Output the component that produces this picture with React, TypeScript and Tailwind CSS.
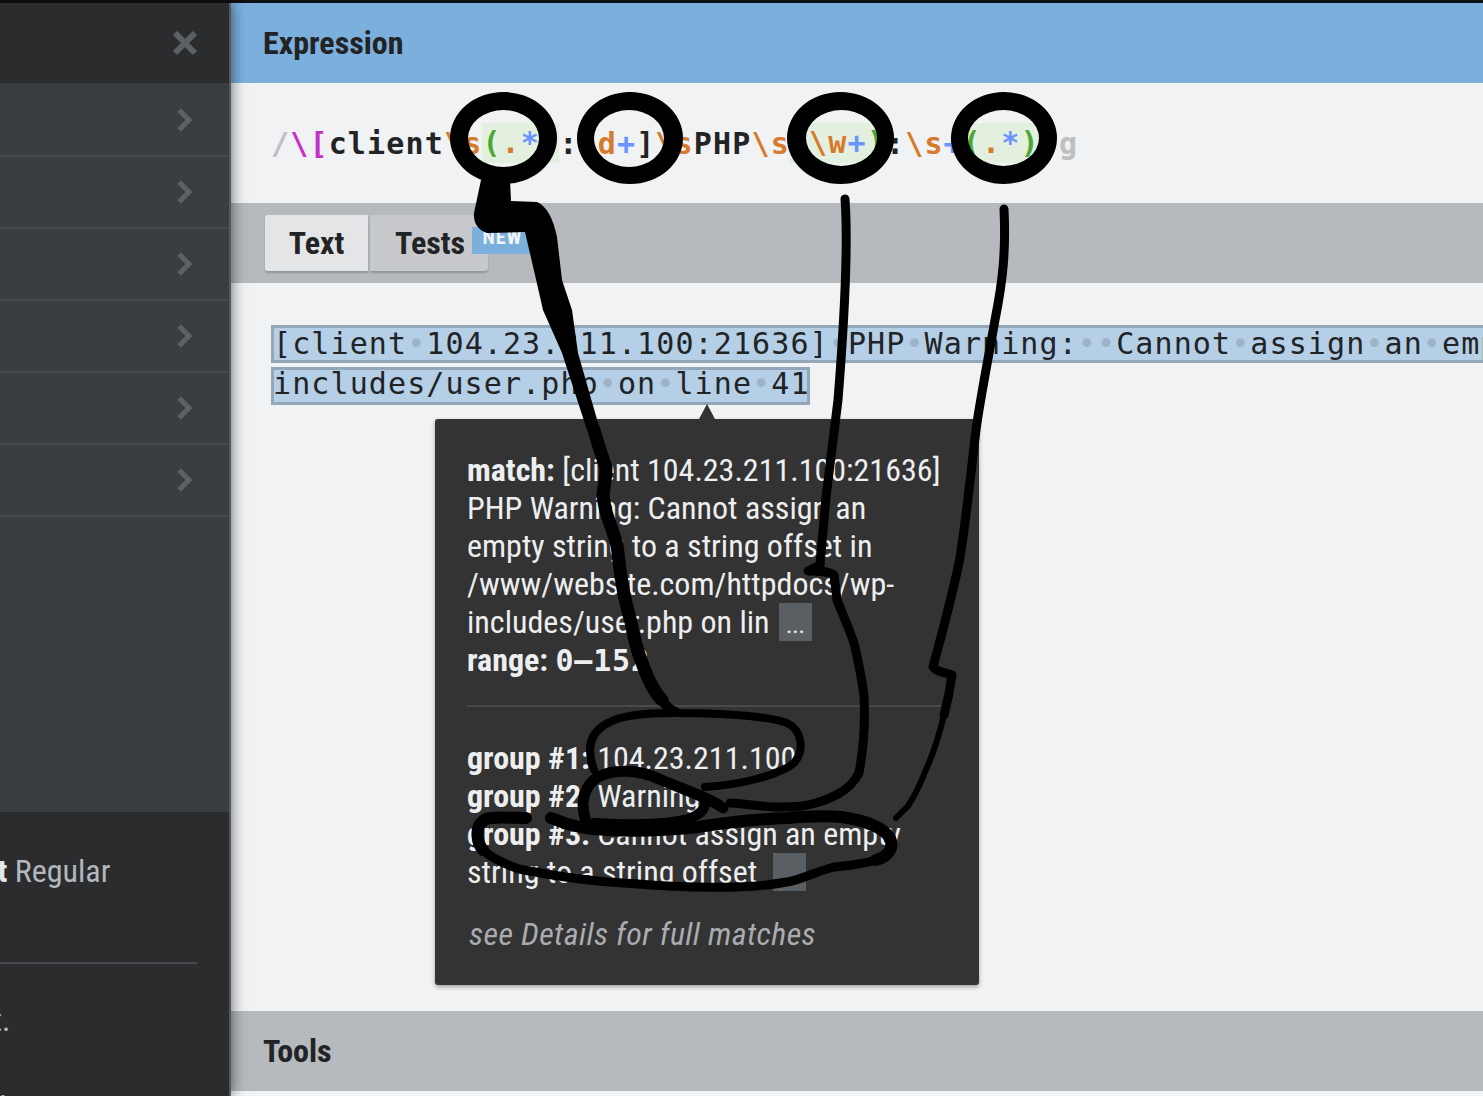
const condensed = "font-['Roboto'] [font-stretch:75%]";

const Chevron = () => (
  <svg width="16" height="24" viewBox="0 0 16 24" className="text-[#5d6165]">
    <path d="M3 2 L13 12 L3 22" fill="none" stroke="currentColor" strokeWidth="5" />
  </svg>
);

const SidebarRow = () => (
  <div className="flex h-[72px] items-center justify-end border-b-2 border-[#47494d] pr-[37px]">
    <Chevron />
  </div>
);

const Sidebar = () => (
  <aside className="z-10 flex w-[231px] shrink-0 flex-col overflow-hidden border-r-2 border-[#55585c] bg-[#3b3e41] shadow-[0_0_14px_rgba(0,0,0,0.6)]">
    <div className="flex h-20 items-center justify-end bg-[#2b2c2e] pr-[31px]">
      <svg width="26" height="26" viewBox="0 0 26 26" className="text-[#5d6165]">
        <path d="M3 3 L23 23 M23 3 L3 23" fill="none" stroke="currentColor" strokeWidth="6" />
      </svg>
    </div>
    <div className="h-[2px]" />
    {[1, 2, 3, 4, 5, 6].map((i) => (
      <SidebarRow key={i} />
    ))}
    <div className="flex-1" />
    <div className={`h-[284px] bg-[#2b2c2e] pt-[40px] ${condensed}`}>
      <p className="-ml-[49px] text-[32px] leading-[38px] text-[#b4b7bb]">
        <b className="text-[#e6e8ea]">Font</b> Regular
      </p>
      <div className="mt-[72px] h-[2px] w-[197px] bg-[#47494d]" />
      <p className="-ml-[46px] mt-[37px] text-[32px] leading-[38px] text-[#b4b7bb]">text.</p>
      <p className="-ml-[8px] mt-[49px] text-[32px] leading-[38px] text-[#b4b7bb]">ll</p>
    </div>
  </aside>
);

const SectionBand = ({ title }: { title: string }) => (
  <div className={`flex h-20 items-center bg-[#b6b9bd] pl-8 text-[32px] font-bold text-[#222325] ${condensed}`}>
    {title}
  </div>
);

const Esc = ({ children }: { children: React.ReactNode }) => <span className="text-[#d77a2b]">{children}</span>;
const Paren = ({ children }: { children: React.ReactNode }) => <span className="text-[#4aa82e]">{children}</span>;
const Quant = ({ children }: { children: React.ReactNode }) => <span className="text-[#6a95ff]">{children}</span>;
const Group = ({ children }: { children: React.ReactNode }) => (
  <span className="inline-block h-10 bg-[#e3f0df] leading-10">{children}</span>
);

const Expression = () => (
  <div className="flex h-[120px] items-center overflow-hidden whitespace-pre bg-[#f0f2f4] pl-[40px] font-['DejaVu_Sans_Mono'] text-[30px] font-bold tracking-[1.15px] text-[#222325]">
    <span className="text-[#bdbfc3]">/</span>
    <span className="text-[#c62fc6]">\[</span>client
    <Esc>\s</Esc>
    <Group>
      <Paren>(</Paren>
      <Esc>.</Esc>
      <Quant>*</Quant>
      <Paren>)</Paren>
    </Group>
    :<Esc>\d</Esc>
    <Quant>+</Quant>]<Esc>\s</Esc>PHP<Esc>\s</Esc>
    <Group>
      <Paren>(</Paren>
      <Esc>\w</Esc>
      <Quant>+</Quant>
      <Paren>)</Paren>
    </Group>
    :<Esc>\s</Esc>
    <Quant>+</Quant>
    <Group>
      <Paren>(</Paren>
      <Esc>.</Esc>
      <Quant>*</Quant>
      <Paren>)</Paren>
    </Group>
    <span className="text-[#bdbfc3]">/g</span>
  </div>
);

const Tabs = () => (
  <div className="flex h-20 items-start bg-[#b6b9bd] pl-[34px] pt-3">
    <div className={`flex h-14 w-[103px] items-center justify-center rounded-l-[3px] bg-[#e4e5e7] text-[32px] font-bold text-[#222325] shadow-[0_2px_2px_rgba(0,0,0,0.2)] ${condensed}`}>
      Text
    </div>
    <div className={`relative ml-[2px] flex h-14 w-[118px] items-center rounded-r-[3px] bg-[#c6c8cb] pl-[25px] text-[32px] font-bold text-[#222325] shadow-[0_2px_2px_rgba(0,0,0,0.2)] ${condensed}`}>
      Tests
      <div className="absolute left-[102px] top-[12px] h-[27px] w-[58px] overflow-hidden bg-[#7cb0dc] pl-[3px] text-center text-[20px] font-bold leading-[20px] tracking-[1px] text-[#f0f4f8]">
        NEW
      </div>
    </div>
  </div>
);

const Dot = () => <span className="text-[#9db3c6]">•</span>;

const SampleText = () => (
  <div className="relative flex-1 overflow-hidden bg-[#f0f2f4] pl-[40px] pt-[42px] font-['DejaVu_Sans_Mono'] text-[30px] tracking-[1.1px] text-[#222325]">
    <div className="whitespace-pre">
      <div className="h-[38px] w-[1300px] bg-[#b4cfe6] pl-[2px] leading-[38px] shadow-[inset_0_0_0_3px_#94a7b8]">
        [client<Dot />104.23.211.100:21636]<Dot />PHP<Dot />Warning:<Dot /><Dot />Cannot<Dot />assign<Dot />an<Dot />empty
      </div>
      <div className="mt-[4px] h-[38px] w-[539px] bg-[#b4cfe6] pl-[2px] leading-[34px] shadow-[inset_0_0_0_3px_#94a7b8]">
        includes/user.php<Dot />on<Dot />line<Dot />41
      </div>
    </div>
    <Tooltip />
  </div>
);

const More = ({ className }: { className: string }) => (
  <span className={`inline-block h-[38px] w-[33px] bg-[#5a5f64] text-center align-top text-[24px] leading-[44px] ${className}`}>
    ...
  </span>
);

// floats over the sample text, so it sits out of flow
const Tooltip = () => (
  <div className={`absolute left-[204px] top-[136px] z-10 w-[544px] whitespace-normal rounded-[3px] bg-[#333333] p-8 text-[32px] leading-[38px] tracking-normal text-[#eceef0] shadow-[0_2px_4px_rgba(0,0,0,0.35)] ${condensed}`}>
    <div className="absolute -top-[15px] left-[264px] h-0 w-0 border-x-[8px] border-b-[15px] border-x-transparent border-b-[#333333]" />
    <p>
      <b>match:</b> [client 104.23.211.100:21636] PHP Warning: Cannot assign an empty string to a string offset in
      /www/website.com/httpdocs/wp-includes/user.php on lin <More className="ml-[2px]" />
    </p>
    <p className="font-bold">
      range: <span className="font-['DejaVu_Sans_Mono'] text-[30px] tracking-[0.8px]">0–152</span>
    </p>
    <div className="mb-8 mt-[25px] h-[2px] bg-[#47494d]" />
    <p>
      <b>group #1:</b> 104.23.211.100
    </p>
    <p>
      <b>group #2:</b> Warning
    </p>
    <p>
      <b>group #3:</b> Cannot assign an empty string to a string offset <More className="ml-2" />
    </p>
    <p className="ml-[2px] mt-6 italic tracking-[0.38px] text-[#a9acb0]">see Details for full matches</p>
  </div>
);

// the hand drawn marks on top of the screenshot
const Scribbles = () => (
  <svg className="pointer-events-none absolute left-0 top-0 z-20" width="1483" height="1096" viewBox="0 0 1483 1096">
    <g fill="#000" fillRule="evenodd">
      <path d="M450 138a53.5 46 0 1 0 107 0a53.5 46 0 1 0-107 0zM468 138.500a35.500 28.500 0 1 1 71 0a35.500 28.500 0 1 1-71 0z" />
      <path d="M577 138a53 46 0 1 0 106 0a53 46 0 1 0-106 0zM594 138.500a35 28.500 0 1 1 70 0a35 28.500 0 1 1-70 0z" />
      <path d="M787 138a53.500 46 0 1 0 107 0a53.500 46 0 1 0-107 0zM806 138a35.500 28 0 1 1 71 0a35.500 28 0 1 1-71 0z" />
      <path d="M951 138a53 46 0 1 0 106 0a53 46 0 1 0-106 0zM968 138a35.500 28 0 1 1 71 0a35.500 28 0 1 1-71 0z" />
      <path d="M481 180 L474 213 Q473 228 487 233 L525 232 L535 275 L543 310 L562 353 L587 430 L600 430 L578 353 L572 310 L562 280 L557 237 Q551 208 537 202 L511 201 L510 180 Z" />
    </g>
    <g fill="none" stroke="#000" strokeLinecap="round" strokeLinejoin="round">
      <path strokeWidth="13" d="M594 430 C598 445 603 458 606 468 C606 478 604 486 603 495 C604 503 605 509 607 515 C611 526 614 535 617 545 C619 560 620 572 622 583 C625 600 628 612 631 622 C634 638 637 650 641 660 C648 680 655 693 662 700" />
      <path strokeWidth="10" d="M662 700 C666 706 670 710 675 712" />
      <path strokeWidth="8" d="M594 770 C585 745 592 730 610 722 C625 714 650 713 673 713 C700 713 760 714 787 723 C802 730 805 750 794 763 C780 775 740 785 705 787" />
      <path strokeWidth="11" d="M723 808 C710 798 685 790 659 779 C640 770 615 768 598 777 C585 785 580 800 585 818" />
      <path strokeWidth="10" d="M594 823 C630 825 670 825 691 818 C700 814 705 810 705 803" />
      <path strokeWidth="12" d="M551 818 C570 826 590 830 609 830 C640 832 670 830 698 827 C730 822 760 819 787 818 C810 816 830 816 841 817 C865 820 884 828 890 838 C895 850 885 858 876 860" />
      <path strokeWidth="9" d="M876 860 C860 865 845 866 834 867 C815 872 800 880 787 882 C760 887 730 888 698 887 C670 887 640 884 609 882 C580 880 545 874 519 869 C505 864 490 857 483 850" />
      <path strokeWidth="12" d="M483 850 C476 842 476 828 481 823 C484 819 487 818 491 818 C503 817 515 818 526 818" />
      <path strokeWidth="9" d="M845 199 C848 240 846 300 838 400 L826 497 L820 565" />
      <path strokeWidth="9" d="M820 565 L808 571 C818 571 828 571 834 575 L837 600 C845 620 852 635 855 647 C860 670 863 685 864 697 C865 715 865 740 859 773 C850 790 835 797 816 803 C800 808 785 807 773 807 C760 806 745 804 730 803" />
      <path strokeWidth="9" d="M1004 209 C1006 250 1003 280 995 320 C988 360 980 400 976 430 C970 480 965 530 959 563 C950 605 940 640 933 667 C938 673 946 672 952 675 C950 690 948 700 944 715" />
      <path strokeWidth="6" d="M944 715 C938 740 932 757 925 772 C918 790 912 800 908 806 L896 818" />
    </g>
  </svg>
);

export default function App() {
  return (
    <div className="relative h-[1096px] w-[1483px] overflow-hidden bg-[#f0f2f4]">
      <div className="h-[3px] bg-[#0f1012]" />
      <div className="flex h-[1093px]">
        <Sidebar />
        <main className="flex min-w-0 flex-1 flex-col">
          <div className={`flex h-20 shrink-0 items-center bg-[#7cb0dc] pl-8 text-[32px] font-bold text-[#222325] ${condensed}`}>
            Expression
          </div>
          <Expression />
          <Tabs />
          <SampleText />
          <SectionBand title="Tools" />
          <div className="h-[5px] shrink-0 bg-[#f0f2f4]" />
        </main>
      </div>
      <Scribbles />
    </div>
  );
}
